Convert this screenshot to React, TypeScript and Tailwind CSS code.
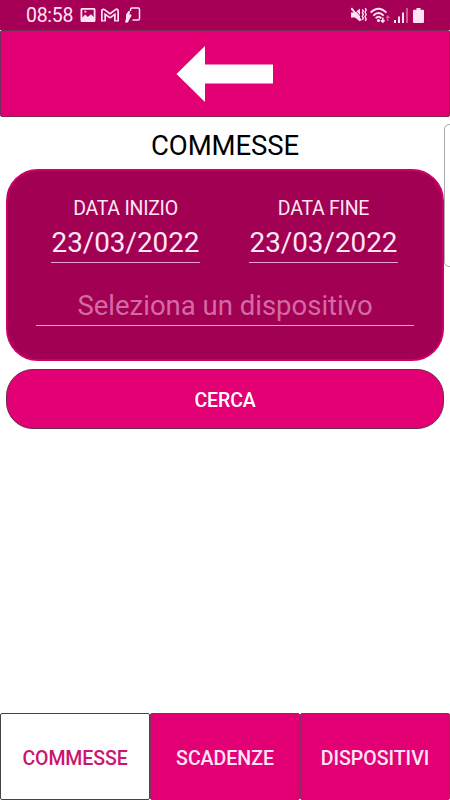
function StatusBar() {
  return (
    <div className="flex h-[30px] items-center justify-between bg-[#a60056] pr-[26px] pl-[26px] text-[#ffe3f3]">
      <div className="flex items-center">
        <span className="w-[47px] pt-px text-[19.500px] leading-[30px] tracking-[-0.300px] whitespace-nowrap">08:58</span>
        {/* Notifiche */}
        <svg className="ml-[7px] h-[14px] w-[16px]" viewBox="0 0 15 14">
          <path
            fill="currentColor"
            fillRule="evenodd"
            d="M1.5 0h12A1.5 1.5 0 0 1 15 1.500v11a1.500 1.500 0 0 1-1.500 1.500h-12A1.500 1.500 0 0 1 0 12.500v-11A1.500 1.500 0 0 1 1.500 0zM1.800 1.700v7.800l3-3 2.500 2.500 3.200-2.700 2.700 2.600V1.700zM4 2.800h1.800v1.800H4z"
          />
        </svg>
        <svg className="ml-[5px] h-[14px] w-[18px]" viewBox="0 0 18 14" fill="none" strokeLinejoin="round">
          <path stroke="currentColor" strokeWidth="5" d="M2.500 13.500V3L9 7.800 15.500 3V13.500" />
          <path stroke="#a60056" strokeWidth="1.600" d="M2.500 12.200V3L9 7.800 15.500 3V12.200" />
        </svg>
        <svg className="ml-[6px] h-[16px] w-[16px]" viewBox="0 0 16 16" fill="none" stroke="currentColor" strokeWidth="1.500">
          <path d="M5.500 4V2.500Q5.500 1 7 1H13Q14.500 1 14.500 2.500V11.500Q14.500 13 13 13H7.500" />
          <path fill="currentColor" stroke="none" d="M3.500 4L5.300 4.500 4.300 8 6 7 6.500 9 4.300 12.500 3 15.500H0L1 11.500V7.500z" />
        </svg>
      </div>
      <div className="flex items-center">
        <svg className="h-[16px] w-[16px]" viewBox="0 0 16 16" fill="none" stroke="currentColor" strokeWidth="2">
          <path fill="currentColor" stroke="none" d="M0 5.500h4L9 1.500v13L4 10.500H0z" />
          <path stroke="#a60056" d="M3.500 2L10 10" strokeWidth=".8" />
          <path d="M.3 1L10 13.500" />
          <path d="M11.300 2.500l1 1.500-1 1.800 1 1.800-1 1.800 1 1.800-1 1.800M14.200 1l1 2-1.200 2.200 1.200 2.300-1.200 2.300 1.200 2.200-1 2" strokeWidth="1.400" />
        </svg>
        <svg className="ml-[3px] h-[17px] w-[20px]" viewBox="0 0 20 16" fill="none" stroke="currentColor" strokeWidth="1.900">
          <path d="M.6 5.200Q8.500-2.800 16.400 5.200M3.300 8.200Q8.500 3 13.700 8.200M5.700 10.700Q8.500 8 11.300 10.700" />
          <circle cx="8.500" cy="13" r="1.600" fill="currentColor" stroke="none" />
          <path d="M12.800 10v4.800M11 12.700l1.800 2 1.800-2" strokeWidth="1.500" />
          <path d="M17.800 13.500V8.500M16.300 10.500l1.500-2 1.500 2" strokeWidth="1.200" opacity=".45" />
        </svg>
        <svg className="ml-[4px] h-[15px] w-[14px]" viewBox="0 0 14 15" fill="currentColor">
          <path d="M0 12h2v3H0zM4 8.500h2V15H4zM8 4.500h2V15H8z" />
          <path d="M12 0h2v15h-2z" opacity=".4" />
        </svg>
        <svg className="ml-[5px] h-[15px] w-[11px]" viewBox="0 0 11 15" fill="currentColor">
          <path d="M3.500 0h4v1.800H10a1 1 0 0 1 1 1V14a1 1 0 0 1-1 1H1a1 1 0 0 1-1-1V2.800a1 1 0 0 1 1-1h2.500z" />
        </svg>
      </div>
    </div>
  );
}

function DateField({ label, value }: { label: string; value: string }) {
  return (
    <div className="flex w-[149px] flex-col items-center text-[#ffe6f5]">
      <span className="text-[19.500px] leading-6 tracking-[-0.250px] whitespace-nowrap">{label}</span>
      <div className="mt-[6px] flex h-[36px] w-full justify-center border-b border-[#eba3cb] text-[27.800px] leading-8 whitespace-nowrap">
        {value}
      </div>
    </div>
  );
}

const tabs = ['COMMESSE', 'SCADENZE', 'DISPOSITIVI'];

export default function App() {
  return (
    <div className="relative flex h-[800px] w-[450px] flex-col overflow-hidden bg-white font-['Roboto',sans-serif]">
      <StatusBar />

      {/* Barra con freccia indietro */}
      <header className="flex h-[87px] shrink-0 items-center justify-center rounded-[2px] border border-[#7b2b58] bg-[#e20074]">
        <svg className="h-[56px] w-[98px]" viewBox="0 0 98 56">
          <path fill="#fff" d="M0.500 28L29 0V18.500H97V37.500H29V56z" />
        </svg>
      </header>

      <h1 className="mt-3 h-8 text-center text-[27.500px] leading-[33px] tracking-[-0.100px] text-black">COMMESSE</h1>

      <main className="flex flex-1 flex-col px-[6px]">
        <section className="mt-2 h-[192px] rounded-[32px] border-2 border-[#cd0068] bg-[#a10053] pt-[26px]">
          <div className="flex justify-between pr-[44px] pl-[43px]">
            <DateField label="DATA INIZIO" value="23/03/2022" />
            <DateField label="DATA FINE" value="23/03/2022" />
          </div>
          <div className="mx-7 mt-[26px] h-[37px] border-b border-[#eba3cb] text-center text-[27.500px] leading-[34px] text-[#d46aa2]">
            Seleziona un dispositivo
          </div>
        </section>

        <button className="mt-2 h-[60px] rounded-[27px] border border-[#6b2c50] bg-[#e20074] pt-[3px] text-[19.500px] font-medium tracking-[-0.100px] text-white">
          CERCA
        </button>
      </main>

      <nav className="grid h-[87px] shrink-0 grid-cols-3">
        {tabs.map((tab, i) => (
          <button
            key={tab}
            className={
              i === 0
                ? 'rounded-[2px] border border-[#444] bg-white pt-1 text-[19.500px] font-medium tracking-[-0.100px] text-[#cc1470]'
                : 'rounded-[2px] border border-[#85305f] bg-[#e20074] pt-1 text-[19.500px] font-medium text-[#ffe6f5]'
            }
          >
            {tab}
          </button>
        ))}
      </nav>

      {/* Maniglia del pannello laterale */}
      <div className="absolute top-[124px] left-[444px] h-[143px] w-3 rounded-[5px] border border-[#aaa] bg-white" />
    </div>
  );
}
